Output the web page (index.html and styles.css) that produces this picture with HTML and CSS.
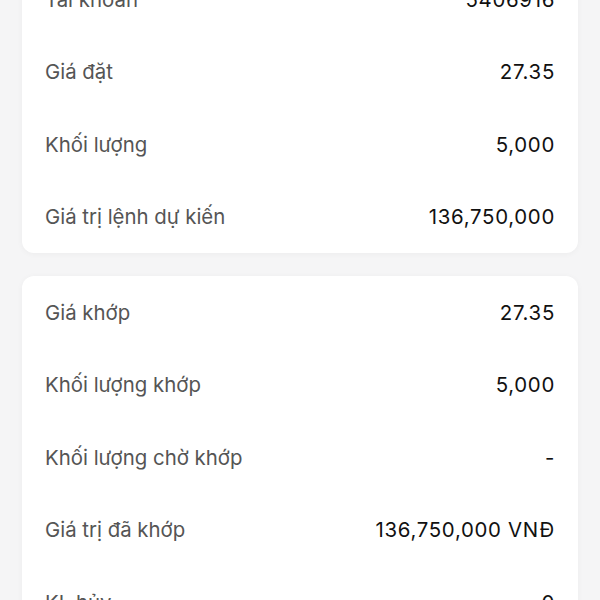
FILE: index.html
```html
<!DOCTYPE html>
<html lang="vi">
<head>
  <meta charset="UTF-8">
  <title>Chi tiết lệnh</title>
  <link rel="stylesheet" href="styles.css">
</head>
<body>

  <div class="page">
    <div class="card">
      <div class="row"><span class="label">Tài khoản</span><span class="value">5406916</span></div>
      <div class="row"><span class="label">Giá đặt</span><span class="value">27.35</span></div>
      <div class="row"><span class="label">Khối lượng</span><span class="value">5,000</span></div>
      <div class="row"><span class="label">Giá trị lệnh dự kiến</span><span class="value">136,750,000</span></div>
    </div>

    <div class="card">
      <div class="row"><span class="label">Giá khớp</span><span class="value">27.35</span></div>
      <div class="row"><span class="label">Khối lượng khớp</span><span class="value">5,000</span></div>
      <div class="row"><span class="label">Khối lượng chờ khớp</span><span class="value">-</span></div>
      <div class="row"><span class="label">Giá trị đã khớp</span><span class="value">136,750,000 VNĐ</span></div>
      <div class="row"><span class="label">KL hủy</span><span class="value">0</span></div>
    </div>
  </div>

</body>
</html>
```

FILE: styles.css
```css
body {
  font-family: 'Inter', 'Roboto', sans-serif;
  background: #f5f5f6;
  margin: 0;
  color: #111;
  overflow: hidden;
}

.page {
  margin-top: -37px;
  padding: 0 22px;
  display: flex;
  flex-direction: column;
  gap: 23px;
}

.card {
  background: #ffffff;
  border-radius: 12px;
  box-shadow: 0 1px 6px rgba(0,0,0,0.04);
}

.row {
  display: flex;
  justify-content: space-between;
  align-items: center;
  height: 72.5px;
  padding: 0 23px;
  font-size: 20.4px;
}

.label {
  color: #555;
}

.value {
  color: #111;
  letter-spacing: 0.7px;
}
```
